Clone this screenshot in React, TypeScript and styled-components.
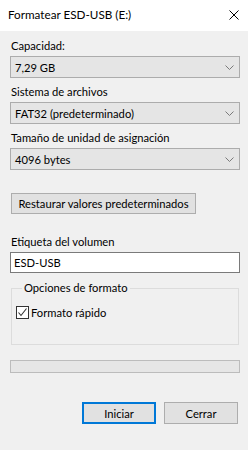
import React from "react";
import styled, { createGlobalStyle } from "styled-components";

const GlobalStyle = createGlobalStyle`
  html, body { margin: 0; padding: 0; background: #f0f0f0; }
  body { font-family: Lato, "Liberation Sans", sans-serif; font-size: 11.2px; color: #000; }
`;

const Window = styled.div`
  width: 248px;
  height: 450px;
  display: flex;
  flex-direction: column;
  background: #f0f0f0;
  overflow: hidden;
`;

const TitleBar = styled.div`
  height: 31px;
  flex: none;
  background: #ffffff;
  display: flex;
  align-items: center;
  justify-content: space-between;
  padding: 0 9px 3px 8px;
  box-sizing: border-box;
`;

const Title = styled.span`
  font-size: 11.7px;
  color: #000;
`;

const CloseIcon = styled.svg`
  width: 10px;
  height: 10px;
  margin-top: 1px;
`;

const Body = styled.div`
  display: flex;
  flex-direction: column;
  padding: 7px 8px 0 10px;
`;

const Field = styled.div<{ $gap: number }>`
  display: flex;
  flex-direction: column;
  gap: 2px;
  margin-top: ${(p) => p.$gap}px;
`;

const Label = styled.div`
  line-height: 16px;
  padding-left: 1px;
  white-space: nowrap;
`;

const Select = styled.div`
  height: 22px;
  box-sizing: border-box;
  background: #e5e5e5;
  border: 1px solid #acacac;
  display: flex;
  align-items: center;
  justify-content: space-between;
  padding: 0 5px 0 4px;
`;

const Chevron = styled.svg`
  width: 9px;
  height: 5px;
`;

const Button = styled.button<{ $default?: boolean }>`
  font: inherit;
  color: #000;
  height: 21px;
  box-sizing: border-box;
  background: #e1e1e1;
  border: ${(p) => (p.$default ? "2px solid #0078d7" : "1px solid #adadad")};
  border-radius: 0;
  padding: 0;
  display: flex;
  align-items: center;
  justify-content: center;
`;

const RestoreButton = styled(Button)`
  width: 185px;
  margin: 23px 0 0 1px;
`;

const TextInput = styled.div`
  height: 21px;
  box-sizing: border-box;
  background: #ffffff;
  border: 1px solid #7a7a7a;
  display: flex;
  align-items: center;
  padding-left: 3px;
`;

const GroupBox = styled.fieldset`
  margin: 8px 1px 0 1px;
  padding: 13px 0 0 4px;
  height: 64px;
  box-sizing: border-box;
  border: 1px solid #dcdcdc;
  min-width: 0;
`;

const Legend = styled.legend`
  padding: 0 2px;
  margin-left: 6px;
  line-height: 14px;
`;

const CheckRow = styled.label`
  display: flex;
  align-items: center;
  gap: 2px;
  margin-top: -2px;
`;

const CheckBox = styled.span`
  width: 13px;
  height: 13px;
  box-sizing: border-box;
  border: 1px solid #333333;
  background: #ffffff;
  display: flex;
  align-items: center;
  justify-content: center;
`;

const Progress = styled.div`
  margin-top: 15px;
  height: 13px;
  box-sizing: border-box;
  background: #e6e6e6;
  border: 1px solid #bcbcbc;
`;

const Footer = styled.div`
  display: flex;
  justify-content: flex-end;
  gap: 8px;
  margin-top: 29px;
  padding-right: 2px;
`;

const FooterButton = styled(Button)`
  width: 74px;
  height: 22px;
`;

function Combo({ value }: { value: string }) {
  return (
    <Select>
      <span>{value}</span>
      <Chevron viewBox="0 0 9 5">
        <path d="M0.5 0.5 L4.5 4.5 L8.5 0.5" fill="none" stroke="#7a7a7a" strokeWidth="1" />
      </Chevron>
    </Select>
  );
}

export default function App() {
  return (
    <>
      <GlobalStyle />
      <Window>
        <TitleBar>
          <Title>Formatear ESD-USB (E:)</Title>
          <CloseIcon viewBox="0 0 10 10">
            <path d="M0.5 0.5 L9.5 9.5 M9.5 0.5 L0.5 9.5" stroke="#000" strokeWidth="1" fill="none" />
          </CloseIcon>
        </TitleBar>
        <Body>
          <Field $gap={0}>
            <Label>Capacidad:</Label>
            <Combo value="7,29 GB" />
          </Field>
          <Field $gap={6}>
            <Label>Sistema de archivos</Label>
            <Combo value="FAT32 (predeterminado)" />
          </Field>
          <Field $gap={6}>
            <Label>Tamaño de unidad de asignación</Label>
            <Combo value="4096 bytes" />
          </Field>
          <RestoreButton>Restaurar valores predeterminados</RestoreButton>
          <Field $gap={20}>
            <Label>Etiqueta del volumen</Label>
            <TextInput>ESD-USB</TextInput>
          </Field>
          <GroupBox>
            <Legend>Opciones de formato</Legend>
            <CheckRow>
              <CheckBox>
                <svg width="11" height="11" viewBox="0 0 11 11">
                  <path d="M1.5 5.5 L4 8.5 L9.5 1.5" fill="none" stroke="#333" strokeWidth="1.1" />
                </svg>
              </CheckBox>
              <span>Formato rápido</span>
            </CheckRow>
          </GroupBox>
          <Progress />
          <Footer>
            <FooterButton $default>Iniciar</FooterButton>
            <FooterButton>Cerrar</FooterButton>
          </Footer>
        </Body>
      </Window>
    </>
  );
}
